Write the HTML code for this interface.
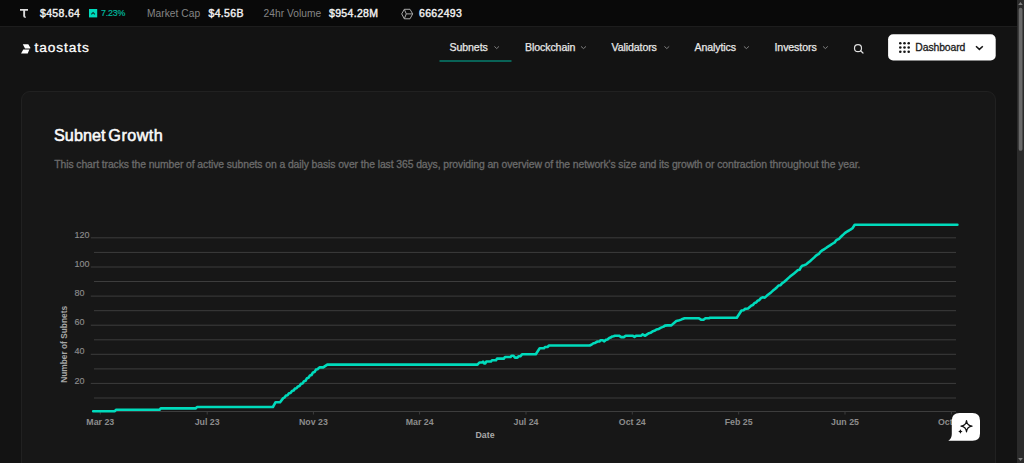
<!DOCTYPE html>
<html lang="en">
<head>
<meta charset="utf-8">
<title>Subnet Growth · taostats</title>
<style>
html,body{margin:0;padding:0;}
body{width:1024px;height:463px;overflow:hidden;background:#131313;font-family:"Liberation Sans",sans-serif;color:#fff;position:relative;}
.abs{position:absolute;white-space:nowrap;line-height:1;}
#topbar{position:absolute;left:0;top:0;width:1017px;height:27px;background:#090909;border-bottom:1px solid #1d1d1d;box-sizing:border-box;}
.tb{font-size:10.5px;top:8px;}
.w{color:#f2f2f2;-webkit-text-stroke:0.4px #f2f2f2;letter-spacing:0.33px;}
.g{color:#858585;font-size:10.2px;top:9px;letter-spacing:0.05px;}
.nav{font-size:10.6px;color:#e8e8e8;top:42.2px;-webkit-text-stroke:0.25px #e8e8e8;letter-spacing:-0.1px;}
#card{position:absolute;left:21px;top:91px;width:975px;height:400px;background:#171717;border:1px solid #212121;border-radius:9px;box-sizing:border-box;}
#scroll{position:absolute;left:1017px;top:0;width:7px;height:463px;background:#2b2b2b;}
</style>
</head>
<body>
<div id="topbar"></div>
<svg class="abs" style="left:20px;top:9px" width="9" height="9" viewBox="0 0 9 9"><path d="M0 0H8V1.7H5.1V7Q5.1 7.6 5.9 7.7V8.7H4.9Q3.2 8.7 3.2 7V1.7H0Z" fill="#dcdcdc"/></svg>
<div class="abs tb w" id="price" style="left:40px">$458.64</div>
<svg class="abs" style="left:89px;top:9.3px" width="9" height="9" viewBox="0 0 9 9"><rect width="8.2" height="8.4" fill="#00dbbc"/><path d="M2.3 5.3L4.1 3.5L5.9 5.3" fill="none" stroke="#0a3a33" stroke-width="1.2"/></svg>
<div class="abs" id="pct" style="left:101px;top:9.3px;font-size:8.8px;color:#00b89e;letter-spacing:-0.15px;-webkit-text-stroke:0.2px #00b89e">7.23%</div>
<div class="abs tb g" id="mc" style="left:147px;font-size:10.2px;top:9px">Market Cap</div>
<div class="abs tb w" id="mcv" style="left:208.5px">$4.56B</div>
<div class="abs tb g" id="vol" style="left:263.5px;font-size:10.2px;top:9px">24hr Volume</div>
<div class="abs tb w" id="volv" style="left:329px">$954.28M</div>
<svg class="abs" style="left:400.5px;top:7.5px" width="13" height="12" viewBox="0 0 13 12"><path d="M0.7 5.9L3.3 1.3H9L11.7 5.9L9 10.8H3.3Z M3.3 1.3L5.3 5.9L3.3 10.8 M5.3 5.9H11.7" fill="none" stroke="#a8a8a8" stroke-width="1" stroke-linejoin="round"/></svg>
<div class="abs tb w" id="blk" style="left:419px">6662493</div>

<!-- nav -->
<svg class="abs" style="left:21px;top:44px" width="10" height="10" viewBox="0 0 10 10"><path d="M1.8 0.2H7.3L9.5 4.1L9 4.5H4Z" fill="#fff"/><path d="M2.3 5.6H8.4L6.7 9.4H0Z" fill="#fff"/></svg>
<div class="abs" id="logo" style="left:34.5px;top:41.3px;font-size:13.7px;color:#fff;letter-spacing:0.9px;-webkit-text-stroke:0.3px #fff">taostats</div>

<div class="abs nav" id="n1" style="left:449.5px">Subnets</div>
<div class="abs nav" id="n2" style="left:525px">Blockchain</div>
<div class="abs nav" id="n3" style="left:611.5px">Validators</div>
<div class="abs nav" id="n4" style="left:694.5px">Analytics</div>
<div class="abs nav" id="n5" style="left:774.5px">Investors</div>
<svg class="abs" style="left:0;top:0" width="1017" height="70" viewBox="0 0 1017 70">
<g fill="none" stroke="#8a8a8a" stroke-width="0.9">
<path d="M494.4 46.4l2.3 2.2l2.3-2.2"/>
<path d="M581 46.4l2.5 2.2l2.5-2.2"/>
<path d="M664.4 46.4l2.4 2.2l2.4-2.2"/>
<path d="M743.9 46.4l2.5 2.2l2.5-2.2"/>
<path d="M823 46.4l2.4 2.2l2.4-2.2"/>
</g>
<rect x="439.5" y="60.5" width="72" height="1" fill="#00b39b"/>
<circle cx="858" cy="48.2" r="3.5" fill="none" stroke="#e0e0e0" stroke-width="1.2"/>
<path d="M860.6 50.8L863 53" stroke="#e0e0e0" stroke-width="1.2" fill="none" stroke-linecap="round"/>
</svg>
<svg class="abs" style="left:886px;top:32px" width="112" height="30" viewBox="886 32 112 30"><rect x="888.1" y="34.3" width="107.6" height="26.1" rx="5" fill="#fff"/></svg>
<svg class="abs" style="left:899px;top:42px" width="11" height="11" viewBox="0 0 11 11"><g fill="#151515">
<circle cx="1.3" cy="1.3" r="1.3"/><circle cx="5.5" cy="1.3" r="1.3"/><circle cx="9.7" cy="1.3" r="1.3"/>
<circle cx="1.3" cy="5.5" r="1.3"/><circle cx="5.5" cy="5.5" r="1.3"/><circle cx="9.7" cy="5.5" r="1.3"/>
<circle cx="1.3" cy="9.7" r="1.3"/><circle cx="5.5" cy="9.7" r="1.3"/><circle cx="9.7" cy="9.7" r="1.3"/></g></svg>
<div class="abs" id="dash" style="left:915.3px;top:43.3px;font-size:10.4px;color:#1a1a1a;-webkit-text-stroke:0.3px #1a1a1a;letter-spacing:-0.1px">Dashboard</div>
<svg class="abs" style="left:974px;top:44px" width="11" height="8" viewBox="0 0 11 8"><path d="M2 2.2L5.4 5.4L8.8 2.2" fill="none" stroke="#151515" stroke-width="1.5"/></svg>

<!-- card -->
<div id="card"></div>
<div class="abs" id="title" style="left:54px;top:126.7px;font-size:16.2px;color:#fafafa;letter-spacing:0.05px;word-spacing:-1.8px;-webkit-text-stroke:0.55px #fafafa">Subnet <span style="letter-spacing:0.45px">Growth</span></div>
<div class="abs" id="desc" style="left:54.3px;top:159.9px;font-size:10.4px;color:#6b6b6b;-webkit-text-stroke:0.3px #6b6b6b;letter-spacing:-0.095px">This chart tracks the number of active subnets on a daily basis over the last 365 days, providing an overview of the network's size and its growth or contraction throughout the year.</div>

<svg class="abs" style="left:0;top:200px" width="1017" height="263" viewBox="0 200 1017 263" font-family="Liberation Sans, sans-serif">
<g stroke="#3d3d3d" stroke-width="1" fill="none">
<path d="M94 237.8H956 M94 252.4H956 M94 267H956 M94 281.5H956 M94 296.1H956 M94 310.7H956 M94 325.2H956 M94 339.8H956 M94 354.3H956 M94 368.9H956 M94 383.4H956 M94 398H956"/>
<path d="M90.8 237.8H94 M90.8 267H94 M90.8 296.1H94 M90.8 325.2H94 M90.8 354.3H94 M90.8 383.4H94"/>
<path d="M94 411.5H956"/>
<path d="M100.3 411.5V414.5 M207.2 411.5V414.5 M313.4 411.5V414.5 M419.6 411.5V414.5 M526 411.5V414.5 M632.3 411.5V414.5 M738.7 411.5V414.5 M845 411.5V414.5 M951.4 411.5V414.5"/>
</g>
<g fill="#8c8c8c" font-size="9" stroke="#8c8c8c" stroke-width="0.15" transform="translate(0 -0.5)">
<text x="74.5" y="238.4">120</text>
<text x="74.5" y="267.6">100</text>
<text x="74.5" y="296.7">80</text>
<text x="74.5" y="325.8">60</text>
<text x="74.5" y="354.9">40</text>
<text x="74.5" y="384">20</text>
</g>
<text transform="translate(67.3 344.4) rotate(-90)" text-anchor="middle" font-size="8.35" font-weight="bold" fill="#a8a8a8" id="ylab">Number of Subnets</text>
<g fill="#8c8c8c" font-size="8.8" font-weight="bold" text-anchor="middle">
<text x="100.3" y="425.2">Mar 23</text>
<text x="207.2" y="425.2">Jul 23</text>
<text x="313.4" y="425.2">Nov 23</text>
<text x="419.6" y="425.2">Mar 24</text>
<text x="526" y="425.2">Jul 24</text>
<text x="632.3" y="425.2">Oct 24</text>
<text x="738.7" y="425.2">Feb 25</text>
<text x="845" y="425.2">Jun 25</text>
<text x="951.4" y="425.2">Oct 25</text>
<text x="485" y="438.3" fill="#a8a8a8">Date</text>
</g>
<path id="line" fill="none" stroke="#00dbbc" stroke-width="2.6" stroke-linejoin="round" stroke-linecap="round" d="M93.2 411.3H114.8L116 409.8H159.5L160.7 408.4H195.8L197 407H272.9L275.6 402.2H280.1L283.2 398.1L284.5 397.6L286 395.5L287.5 395.2L289 393.2L290.5 393L292 391L293.5 390.6L295 388.6L296.5 388.3L298 386.4L299.5 386L301 383.8L302.5 383.4L304 381.2L305.5 380.8L307 378.2L308.5 377.8L310 375.4L311.5 375L313 372.4L314.5 372L316 369.6L317.5 369.2L319.5 367.4H323.2L327.3 364.6H477.5L479.4 362.5H482L483 361.6L484.3 363.5H485.3L486.3 361.5H491L492 360.2H496L497 358.6H503.8L505 357H510.6L511.5 355.7H513.5L515 357.6H517.4L518.5 356.3H520.3L522 354.3H535.8L539.7 348.3H544L545 347H547.5L549 345.5H589.7L592 344.3L593.5 343.2L595 342.9L597.5 341.5H599.5L600.5 340.2H602.4L604.3 341.3L606 339.8L607.5 339.4L609.2 338L610.5 337.6L612 336.6L613.5 336.2L615 335.7H619L621.2 337.1H623.8L625.7 335.7H632.5L634.5 336.9L636.4 335.7H641.3L642.6 334.3L645.2 335.8L647 334.4L649 333.2L650.5 332.8L653 331.2L655 330.6L656.5 329.4L658.8 328.9L661 327.6L663.6 326.6L665 325.6L667.5 325.4H671.4L673.5 323.4L676.3 321.1L678.5 320.6L681.1 319.6L682.5 318.9L684.6 318.2H698.6L701 319.7H703.5L705.4 318.2H709L710 317.8H736.8L741.5 310.5L743.5 310.2L745 308.9L748 308.5L750 306.8L751.5 305.4L753 304.9L754.5 303L756 302.6L757.5 300.8L759 300.3L760.9 298.1L762.5 297.3L764.8 297.6L767 295.6L769 294L771 292.4L773 290.6L775 289L777 287.2L778.5 285.6L780.5 285.2L782 283.4L784 282L786 280.2L788 278.4L790 276.6L792 275L794 273.4L796 271.8L797.5 270.3L799.5 269.8L801 267.2L802.3 265.7L804 265.2L806.2 264.4L808 262.8L810 261.2L812 259.4L814 257.6L816 255.6L817.5 254.6L819 253.8L820.5 251.8L821.8 250.7L824 249.3L826 248L828 246.6L830 245.4L832 244L834.7 242.4L836 240.6L837.5 239.4L839 239L840.5 237.2L842 235.8L843.5 234.4L845.1 232.8L847 231.6L849 230.5L850.8 229.4L852.5 228.2L854.7 224.8H957.4"/>
</svg>

<!-- chat bubble -->
<svg class="abs" style="left:946px;top:411px" width="36" height="32" viewBox="946 411 36 32">
<path d="M959.5 413H972.5Q980 413 980 420.5V433.5Q980 440.8 972.5 440.8H948.3Q951.8 438.5 951.8 434V420.5Q951.8 413 959.5 413Z" fill="#fff"/>
<path d="M966.5 420.6Q967.1 425.6 972 426.2Q967.1 426.8 966.5 431.8Q965.9 426.8 961 426.2Q965.9 425.6 966.5 420.6Z" fill="none" stroke="#111" stroke-width="1.25" stroke-linejoin="round"/>
<path d="M960.4 429.3Q960.8 431.1 962.6 431.5Q960.8 431.9 960.4 433.7Q960 431.9 958.2 431.5Q960 431.1 960.4 429.3Z" fill="#111"/>
</svg>

<!-- scrollbar -->
<div id="scroll"></div>
<svg class="abs" style="left:1017px;top:0" width="7" height="463" viewBox="0 0 7 463">
<path d="M1.2 5L3.5 2L5.8 5Z" fill="#808080"/>
<rect x="1.7" y="7.8" width="3.8" height="143" rx="1.9" fill="#6a6a6a"/>
<path d="M1.2 458L3.5 461L5.8 458Z" fill="#808080"/>
</svg>
</body>
</html>
